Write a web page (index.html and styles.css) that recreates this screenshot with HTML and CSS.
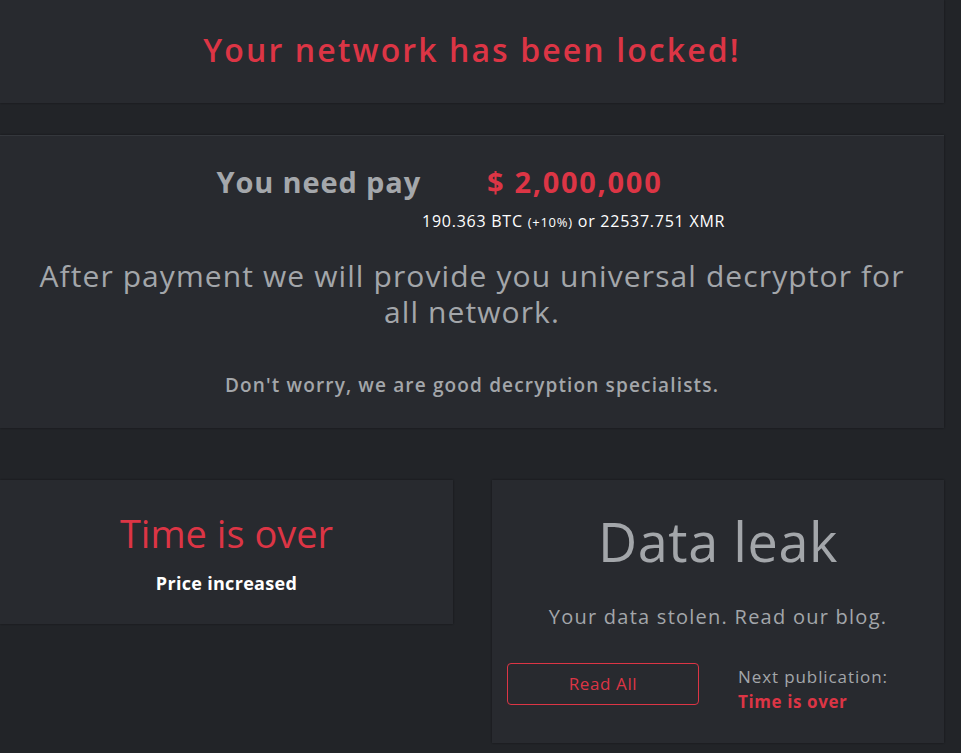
FILE: index.html
```html
<!DOCTYPE html>
<html lang="en">
<head>
<meta charset="utf-8">
<title>Locked</title>
<link rel="stylesheet" href="styles.css">
</head>
<body>
<div class="page">
  <section class="card card-head">
    <h1 class="title">Your network has been locked!</h1>
  </section>

  <section class="card card-pay">
    <div class="pay-row">
      <div class="pay-label">You need pay</div>
      <div class="pay-amount">$ 2,000,000</div>
    </div>
    <div class="pay-sub">190.363 BTC <span class="small">(+10%)</span> or 22537.751 XMR</div>
    <p class="pay-info">After payment we will provide you universal decryptor for all network.</p>
    <p class="pay-note">Don't worry, we are good decryption specialists.</p>
  </section>

  <div class="row">
    <section class="card card-time">
      <div class="time-title">Time is over</div>
      <div class="time-sub">Price increased</div>
    </section>
    <section class="card card-leak">
      <div class="leak-title">Data leak</div>
      <div class="leak-text">Your data stolen. Read our blog.</div>
      <div class="leak-row">
        <div class="leak-btn-cell"><a class="btn" href="#">Read All</a></div>
        <div class="leak-next">
          <div class="next-label">Next publication:</div>
          <div class="next-value">Time is over</div>
        </div>
      </div>
    </section>
  </div>
</div>
</body>
</html>
```

FILE: styles.css
```css
html, body {
  margin: 0;
  padding: 0;
  background: #222428;
}
body {
  font-family: "Open Sans", "DejaVu Sans", sans-serif;
  color: #a3a6aa;
  height: 753px;
  overflow: hidden;
}
.page {
  width: 944px;
}
.card {
  background: #282a2f;
  box-shadow: 0 0 2px rgba(0, 0, 0, 0.45);
  box-sizing: border-box;
}
.card-head {
  height: 103px;
  display: flex;
  align-items: center;
  justify-content: center;
  padding-bottom: 4px;
}
.title {
  margin: 0;
  font-size: 32px;
  font-weight: 600;
  color: #dc3545;
  letter-spacing: 2.1px;
}
.card-pay {
  margin-top: 32px;
  height: 293px;
  border-top: 1px solid #34373c;
  padding-top: 26px;
  text-align: center;
}
.pay-row {
  display: grid;
  grid-template-columns: 1fr 1fr;
  height: 40px;
  line-height: 40px;
  font-size: 29px;
  font-weight: 700;
}
.pay-label {
  text-align: right;
  padding-right: 51px;
  color: #a4a7ab;
  letter-spacing: 0.85px;
}
.pay-amount {
  text-align: left;
  padding-left: 15px;
  color: #dc3545;
  letter-spacing: 1.7px;
}
.pay-sub {
  text-align: left;
  padding-left: 422px;
  margin-top: 5px;
  font-size: 16px;
  line-height: 28px;
  color: #ffffff;
  letter-spacing: 0.75px;
}
.pay-sub .small {
  font-size: 13px;
}
.pay-info {
  margin: 22px 20px 0;
  font-size: 30px;
  line-height: 36px;
  color: #a3a6aa;
  letter-spacing: 1.1px;
}
.pay-note {
  margin: 42px 0 0;
  font-size: 19px;
  font-weight: 600;
  line-height: 26px;
  color: #a3a6aa;
  letter-spacing: 1.15px;
}
.row {
  display: grid;
  grid-template-columns: 453px 452px;
  column-gap: 39px;
  margin-top: 52px;
  align-items: start;
}
.card-time {
  height: 144px;
  text-align: center;
  padding-top: 30px;
}
.time-title {
  font-size: 38px;
  line-height: 46px;
  color: #dc3545;
}
.time-sub {
  margin-top: 15px;
  font-size: 18px;
  font-weight: 700;
  line-height: 24px;
  color: #ffffff;
  letter-spacing: 0.3px;
}
.card-leak {
  height: 263px;
  text-align: center;
  padding-top: 29px;
}
.leak-title {
  font-size: 54px;
  line-height: 64px;
  color: #a3a6aa;
  letter-spacing: 0.6px;
}
.leak-text {
  margin-top: 30px;
  font-size: 20px;
  line-height: 28px;
  color: #a3a6aa;
  letter-spacing: 1.25px;
}
.leak-row {
  display: grid;
  grid-template-columns: 226px 1fr;
  margin-top: 32px;
  text-align: left;
}
.leak-btn-cell {
  padding: 0 15px;
}
.btn {
  display: block;
  box-sizing: border-box;
  width: 192px;
  height: 42px;
  line-height: 40px;
  border: 1px solid #dc3545;
  border-radius: 4px;
  color: #dc3545;
  text-align: center;
  font-size: 17px;
  letter-spacing: 0.6px;
  text-decoration: none;
}
.leak-next {
  padding-left: 20px;
  padding-top: 2px;
}
.next-label {
  font-size: 17px;
  line-height: 24px;
  color: #a3a6aa;
  letter-spacing: 0.9px;
}
.next-value {
  font-size: 17px;
  font-weight: 700;
  line-height: 26px;
  color: #dc3545;
  letter-spacing: 0.6px;
}
```
